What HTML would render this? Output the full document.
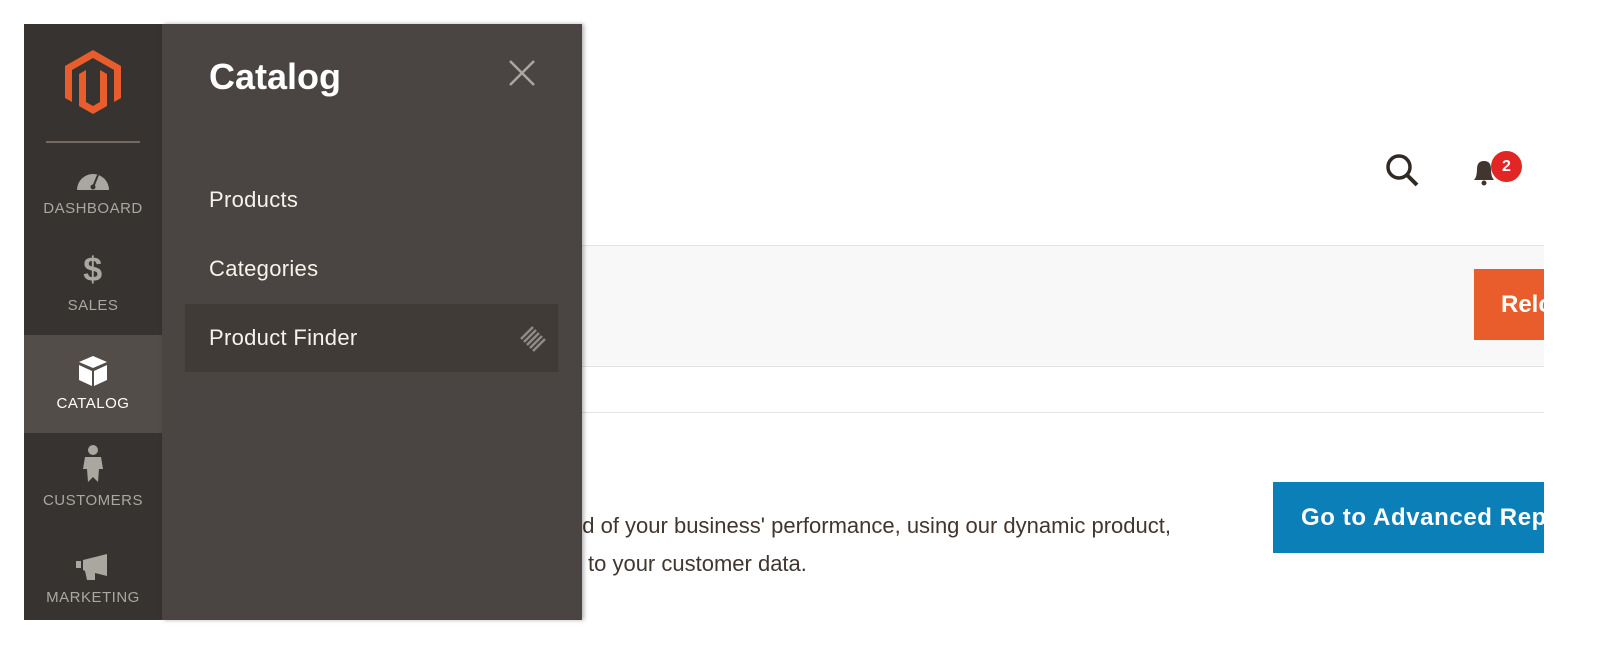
<!DOCTYPE html>
<html><head><style>
body{margin:0;width:1600px;height:657px;background:#fff;position:relative;overflow:hidden;font-family:"Liberation Sans",sans-serif}
.a{position:absolute}
.nav{left:24px;top:24px;width:138px;height:596px;background:#373330}
.item{position:absolute;left:0;width:138px;text-align:center;color:#aaa6a0;font-size:15px;letter-spacing:.5px}
.panel{left:162px;top:24px;width:420px;height:596px;background:#4a4542;box-shadow:2px 0 4px rgba(0,0,0,.3)}
.sub{position:absolute;left:47px;color:#f7f3eb;font-size:22px;letter-spacing:.3px}
</style></head><body>
<div class="a" style="left:582px;top:245px;width:962px;height:120px;background:#f8f8f8;border-top:1px solid #e3e3e3;border-bottom:1px solid #e3e3e3"></div>
<div class="a" style="left:582px;top:412px;width:962px;height:1px;background:#e3e3e3"></div>
<div class="a" style="left:1474px;top:269px;width:70px;height:71px;background:#e85d2b;overflow:hidden;color:#fff;font-weight:bold;font-size:24px;line-height:71px;padding-left:27px;box-sizing:border-box">Relo</div>
<div class="a" style="left:1273px;top:482px;width:271px;height:71px;background:#0a7fb8;overflow:hidden;color:#fff;font-weight:bold;font-size:24px;line-height:71px;padding-left:28px;box-sizing:border-box;white-space:nowrap;letter-spacing:.6px">Go to Advanced Reports</div>
<div class="a" style="left:570px;top:507px;color:#41362f;font-size:22px;line-height:38px;white-space:nowrap">nd of your business' performance, using our dynamic product,</div>
<div class="a" style="left:588px;top:545px;color:#41362f;font-size:22px;line-height:38px;white-space:nowrap">to your customer data.</div>
<svg class="a" style="left:1384px;top:152px" width="36" height="36" viewBox="0 0 36 36"><circle cx="15" cy="15" r="11" fill="none" stroke="#302a26" stroke-width="3.5"/><line x1="23" y1="23" x2="33" y2="33" stroke="#302a26" stroke-width="4"/></svg>
<svg class="a" style="left:1470px;top:155px" width="30" height="32" viewBox="0 0 30 32"><path d="M4 25 Q7 22 7 14 Q7 6 14 6 Q21 6 21 14 Q21 22 24 25 Z" fill="#41362f"/><circle cx="14" cy="28" r="2.5" fill="#41362f"/></svg>
<div class="a" style="left:1491px;top:151px;width:31px;height:31px;border-radius:50%;background:#e22626;color:#fff;font-weight:bold;font-size:16px;text-align:center;line-height:31px">2</div>

<div class="a nav">
 <svg style="position:absolute;left:40px;top:26px" width="58" height="65" viewBox="0 0 58 65"><path d="M29 0 L57 16 L57 48 L50 52 L50 20 L29 8 L8 20 L8 52 L1 48 L1 16 Z" fill="#e85d2b"/><path d="M15 24 L22 20 L22 52 L29 56 L36 52 L36 20 L43 24 L43 56 L29 64 L15 56 Z" fill="#e85d2b"/></svg>
 <div style="position:absolute;left:22px;top:117px;width:94px;height:2px;background:#736963"></div>
 <svg style="position:absolute;left:52px;top:143px" width="34" height="24" viewBox="0 0 34 24"><path d="M1 23 A16 16 0 0 1 33 23 Z" fill="#aaa6a0"/><line x1="17" y1="20" x2="22" y2="8" stroke="#373330" stroke-width="2"/><circle cx="17" cy="20" r="2.5" fill="#373330"/></svg>
 <div class="item" style="top:176px">DASHBOARD</div>
 <div class="item" style="top:227px;font-size:34px;font-weight:bold">$</div>
 <div class="item" style="top:273px">SALES</div>
 <div style="position:absolute;left:0;top:311px;width:138px;height:98px;background:#524d49"></div>
 <svg style="position:absolute;left:53px;top:331px" width="32" height="32" viewBox="0 0 32 32"><path d="M16 1 L30 7 L16 13 L2 7 Z" fill="#fff"/><path d="M2 10 L15 16 L15 31 L2 25 Z M17 16 L30 10 L30 25 L17 31 Z" fill="#fff"/></svg>
 <div class="item" style="top:371px;color:#fff">CATALOG</div>
 <svg style="position:absolute;left:58px;top:421px" width="22" height="38" viewBox="0 0 22 38"><circle cx="11" cy="5" r="5" fill="#aaa6a0"/><path d="M3 12 H19 L21 24 L17 24 L16 37 L11 32 L6 37 L5 24 L1 24 Z" fill="#aaa6a0"/></svg>
 <div class="item" style="top:468px">CUSTOMERS</div>
 <svg style="position:absolute;left:51px;top:530px" width="36" height="26" viewBox="0 0 36 26"><path d="M1 7 H6 V14 H1 Z M8 6 L32 0 V22 L20 19 L20 26 L12 26 L10 17 L8 16 Z" fill="#aaa6a0"/></svg>
 <div class="item" style="top:565px">MARKETING</div>
</div>

<div class="a panel">
 <div style="position:absolute;left:47px;top:32px;color:#fff;font-size:36px;font-weight:bold">Catalog</div>
 <svg style="position:absolute;left:346px;top:35px" width="28" height="28" viewBox="0 0 28 28"><path d="M2 2 L26 26 M26 2 L2 26" stroke="#aaa6a0" stroke-width="2.5"/></svg>
 <div class="sub" style="top:163px">Products</div>
 <div class="sub" style="top:232px">Categories</div>
 <div style="position:absolute;left:23px;top:280px;width:373px;height:68px;background:#403b37"></div>
 <div class="sub" style="top:301px">Product Finder</div>
 <svg style="position:absolute;left:356px;top:300px" width="30" height="30" viewBox="0 0 30 30"><g stroke="#8f8a84" stroke-width="2.5"><path d="M3 15 L15 3 M6 18 L18 6 M9 21 L21 9"/><path d="M15 27 L27 15 M12 24 L24 12"/></g></svg>
</div>
</body></html>
